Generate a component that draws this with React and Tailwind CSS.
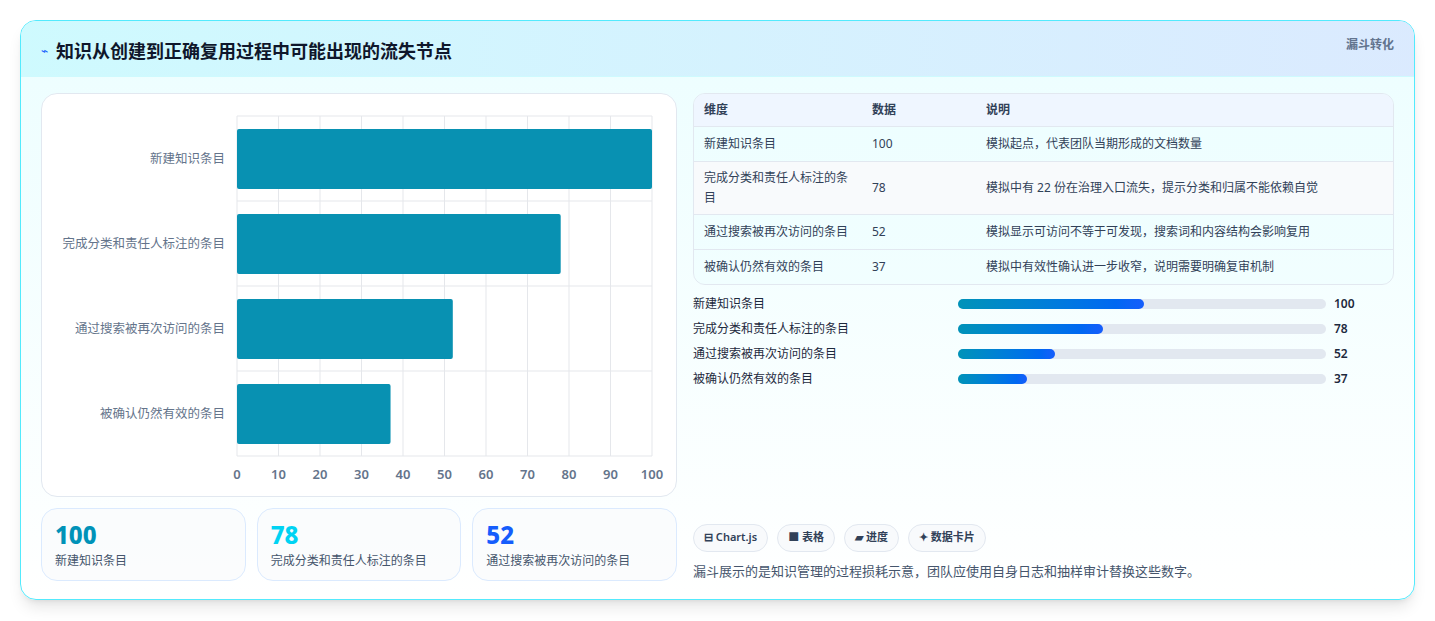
const rows = [
  { label: "新建知识条目", value: 100, note: "模拟起点，代表团队当期形成的文档数量" },
  { label: "完成分类和责任人标注的条目", value: 78, note: "模拟中有 22 份在治理入口流失，提示分类和归属不能依赖自觉" },
  { label: "通过搜索被再次访问的条目", value: 52, note: "模拟显示可访问不等于可发现，搜索词和内容结构会影响复用" },
  { label: "被确认仍然有效的条目", value: 37, note: "模拟中有效性确认进一步收窄，说明需要明确复审机制" },
];

const FONT = { fontFamily: '"Noto Sans", "Noto Sans CJK SC", sans-serif' };

const Chart = () => {
  const x0 = 195, x1 = 610, yTop = 22, rowH = 85;
  const sx = (v) => x0 + ((x1 - x0) * v) / 100;
  return (
    <svg width="636" height="404" className="block">
      {[0, 10, 20, 30, 40, 50, 60, 70, 80, 90, 100].map((t) => (
        <g key={t}>
          <line x1={sx(t)} x2={sx(t)} y1={yTop} y2={362} stroke="#e5e7eb" />
          <text x={sx(t)} y={385} textAnchor="middle" fontSize="13" fontWeight="600" fill="#64748b">{t}</text>
        </g>
      ))}
      {[0, 1, 2, 3, 4].map((i) => (
        <line key={i} x1={x0} x2={x1} y1={yTop + i * rowH} y2={yTop + i * rowH} stroke="#e5e7eb" />
      ))}
      {rows.map((r, i) => (
        <g key={r.label}>
          <rect x={x0} y={yTop + i * rowH + 13} width={sx(r.value) - x0} height={60} rx="2" fill="#0891b2" />
          <text x={x0 - 12} y={yTop + i * rowH + 47} textAnchor="end" fontSize="12.5" fill="#64748b">{r.label}</text>
        </g>
      ))}
    </svg>
  );
};

export default function App() {
  return (
    <div className="w-[1435px] h-[621px] bg-white p-5" style={FONT}>
      <div className="h-[580px] rounded-2xl border border-cyan-300 bg-gradient-to-b from-cyan-50 to-white shadow-lg overflow-hidden">
        <div className="h-14 flex items-start justify-between bg-gradient-to-r from-cyan-100 to-blue-100 px-5 border-b border-cyan-100">
          <div className="flex items-center gap-2 mt-4">
            <span className="text-blue-600 text-xs">⌁</span>
            <h1 className="text-lg font-bold text-slate-900">知识从创建到正确复用过程中可能出现的流失节点</h1>
          </div>
          <span className="mt-4 text-xs font-semibold text-slate-500">漏斗转化</span>
        </div>
        <div className="flex gap-4 px-5 pt-4">
          <div className="w-[636px] flex flex-col gap-[11px]">
            <div className="h-[404px] rounded-2xl border border-slate-200 bg-white overflow-hidden"><Chart /></div>
            <div className="grid grid-cols-3 gap-[11px]">
              {[["100", "text-cyan-600"], ["78", "text-cyan-400"], ["52", "text-blue-600"]].map(([v, c], i) => (
                <div key={v} className="h-[73px] rounded-2xl border border-blue-100 bg-slate-50/60 px-[13px] pt-3">
                  <div className={`text-2xl font-extrabold leading-7 ${c}`}>{v}</div>
                  <div className="text-xs text-slate-600 mt-1">{rows[i].label}</div>
                </div>
              ))}
            </div>
          </div>
          <div className="flex-1 flex flex-col">
            <div className="rounded-xl border border-slate-200 overflow-hidden text-xs text-slate-700">
              <div className="grid grid-cols-[168px_114px_1fr] h-8 items-center bg-blue-50 font-semibold text-slate-700 px-[10px]">
                <span>维度</span><span>数据</span><span>说明</span>
              </div>
              {rows.map((r, i) => (
                <div key={r.label} className={`grid grid-cols-[168px_114px_1fr] items-center px-[10px] border-t border-slate-200 ${i === 1 ? "h-[53px] bg-slate-50" : "h-[35px] bg-cyan-50/40"}`}>
                  <span className="pr-4 leading-5">{r.label}</span><span>{r.value}</span><span>{r.note}</span>
                </div>
              ))}
            </div>
            <div className="flex flex-col gap-[9px] mt-[11px]">
              {rows.map((r) => (
                <div key={r.label} className="flex items-center h-4 text-xs text-slate-800">
                  <span className="w-[265px]">{r.label}</span>
                  <div className="w-[368px] h-[10px] rounded-full bg-slate-200">
                    <div className="h-full rounded-full bg-gradient-to-r from-cyan-600 to-blue-600" style={{ width: `${(r.value / 100) * 50.5}%` }} />
                  </div>
                  <span className="ml-2 font-semibold">{r.value}</span>
                </div>
              ))}
            </div>
            <div className="flex-1" />
            <div className="flex gap-[9px] h-[28px] mt-[131px]">
              {["⊟ Chart.js", "■ 表格", "▰ 进度", "✦ 数据卡片"].map((t) => (
                <span key={t} className="px-[10px] rounded-full border border-slate-200 bg-slate-50 text-[11px] font-semibold text-slate-700 flex items-center">{t}</span>
              ))}
            </div>
            <p className="mt-[10px] text-[13px] text-slate-600">漏斗展示的是知识管理的过程损耗示意，团队应使用自身日志和抽样审计替换这些数字。</p>
          </div>
        </div>
      </div>
    </div>
  );
}
